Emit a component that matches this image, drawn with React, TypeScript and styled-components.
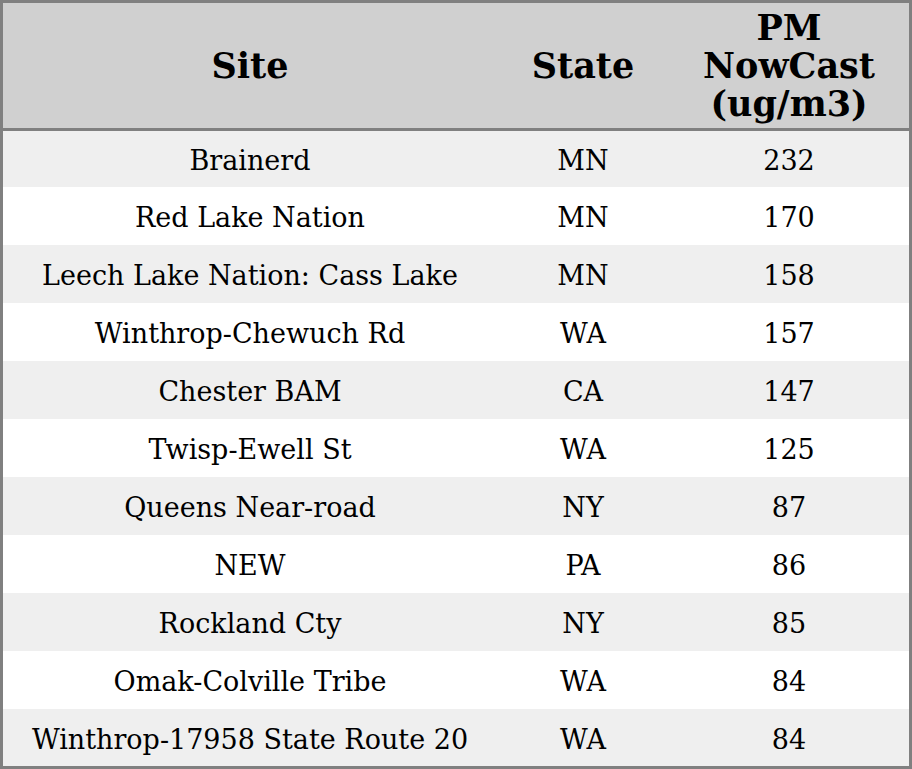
import React from "react";
import styled, { createGlobalStyle } from "styled-components";

const Global = createGlobalStyle`
  html, body { margin: 0; padding: 0; background: #ffffff; }
  body { font-family: "DejaVu Serif", serif; }
`;

const Table = styled.table`
  width: 912px;
  border-collapse: separate;
  border-spacing: 0;
  border: 3px solid #808080;
  font-family: "DejaVu Serif", serif;
  color: #000;
  table-layout: fixed;
`;

const HeadRow = styled.tr`
  background: #d0d0d0;
`;

const HeadCell = styled.th<{ $w: number }>`
  width: ${(p) => p.$w}px;
  height: 125px;
  padding: 0;
  box-sizing: content-box;
  border-bottom: 3px solid #808080;
  font-size: 35px;
  font-weight: bold;
  line-height: 38px;
  text-align: center;
  vertical-align: middle;
`;

const Row = styled.tr<{ $alt: boolean; $h: number }>`
  background: ${(p) => (p.$alt ? "#efefef" : "#ffffff")};
  height: ${(p) => p.$h}px;
`;

const Cell = styled.td`
  padding: 4px 0 0;
  font-size: 27px;
  line-height: 32px;
  text-align: center;
  vertical-align: middle;
  white-space: nowrap;
`;

const rows: [string, string, string][] = [
  ["Brainerd", "MN", "232"],
  ["Red Lake Nation", "MN", "170"],
  ["Leech Lake Nation: Cass Lake", "MN", "158"],
  ["Winthrop-Chewuch Rd", "WA", "157"],
  ["Chester BAM", "CA", "147"],
  ["Twisp-Ewell St", "WA", "125"],
  ["Queens Near-road", "NY", "87"],
  ["NEW", "PA", "86"],
  ["Rockland Cty", "NY", "85"],
  ["Omak-Colville Tribe", "WA", "84"],
  ["Winthrop-17958 State Route 20", "WA", "84"],
];

export default function App() {
  return (
    <>
      <Global />
      <Table>
        <thead>
          <HeadRow>
            <HeadCell $w={494}>Site</HeadCell>
            <HeadCell $w={172}>State</HeadCell>
            <HeadCell $w={240}>
              PM
              <br />
              NowCast
              <br />
              (ug/m3)
            </HeadCell>
          </HeadRow>
        </thead>
        <tbody>
          {rows.map((r, i) => (
            <Row
              key={i}
              $alt={i % 2 === 0}
              $h={i === 0 ? 56 : i === rows.length - 1 ? 57 : 58}
            >
              <Cell>{r[0]}</Cell>
              <Cell>{r[1]}</Cell>
              <Cell>{r[2]}</Cell>
            </Row>
          ))}
        </tbody>
      </Table>
    </>
  );
}
